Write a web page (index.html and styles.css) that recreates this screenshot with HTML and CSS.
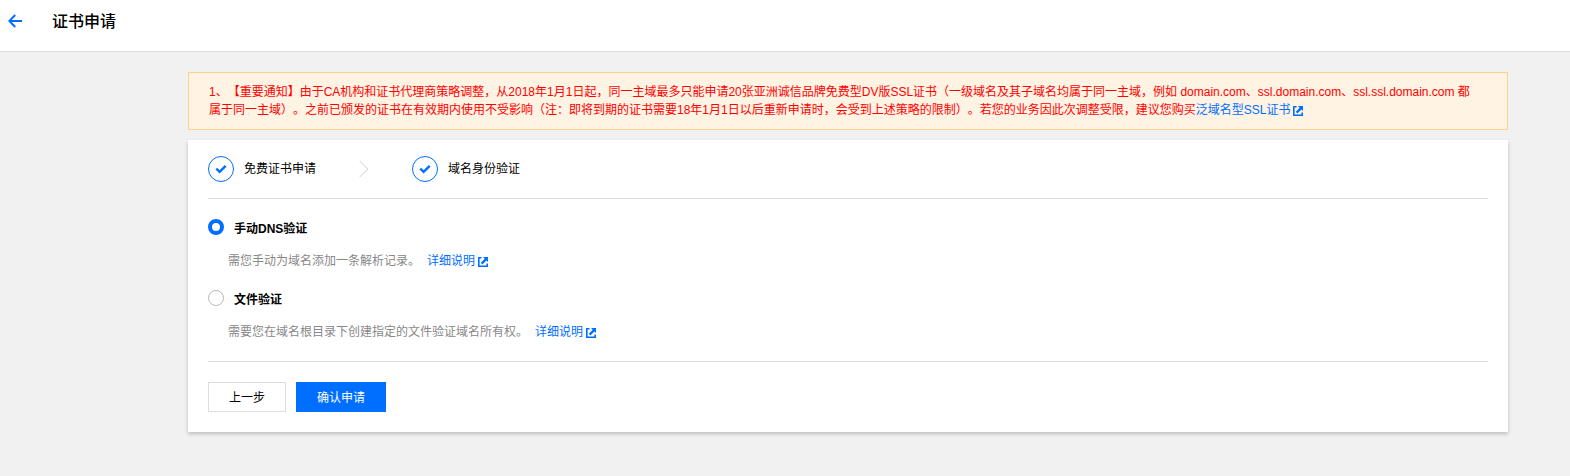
FILE: index.html
```html
<!DOCTYPE html>
<html lang="zh-CN">
<head>
<meta charset="utf-8">
<title>证书申请</title>
<link rel="stylesheet" href="styles.css">
</head>
<body>
<svg width="0" height="0" class="defs">
  <symbol id="external" viewBox="0 0 10 10">
    <path d="M3.5 0H0v10h10V6.5H8.4v1.9H1.6V1.6h1.9z"/>
    <path d="M5 0H10v5L8.4 3.4 4.4 7.4 2.8 5.8 6.7 1.8z"/>
  </symbol>
  <symbol id="check" viewBox="0 0 12 10">
    <path d="M1.3 4.7 4.6 7.9 10.7 1.9" fill="none" stroke="#006eff" stroke-width="2.4"/>
  </symbol>
</svg>
<header class="header">
  <a class="back"><svg width="14" height="14" viewBox="0 0 14 14"><path d="M14 7H1.5M7.2 1 1.3 7l5.9 6" fill="none" stroke="#006eff" stroke-width="2"/></svg></a>
  <h1 class="title">证书申请</h1>
</header>
<main class="content">
  <div class="notice">1、【重要通知】由于CA机构和证书代理商策略调整，从2018年1月1日起，同一主域最多只能申请20张亚洲诚信品牌免费型DV版SSL证书（一级域名及其子域名均属于同一主域，例如 domain.com、ssl.domain.com、ssl.ssl.domain.com 都<br>属于同一主域）。之前已颁发的证书在有效期内使用不受影响（注：即将到期的证书需要18年1月1日以后重新申请时，会受到上述策略的限制）。若您的业务因此次调整受限，建议您购买<a class="link">泛域名型SSL证书<svg class="ext"><use href="#external"/></svg></a></div>
  <section class="card">
    <div class="steps">
      <span class="circle"><svg width="12" height="10"><use href="#check"/></svg></span>
      <span class="step-name">免费证书申请</span>
      <svg class="chevron" width="10" height="18" viewBox="0 0 10 18"><path d="M.7 1 8.7 9l-8 8" fill="none" stroke="#ccc"/></svg>
      <span class="circle"><svg width="12" height="10"><use href="#check"/></svg></span>
      <span class="step-name">域名身份验证</span>
    </div>
    <div class="options">
      <div class="option">
        <label class="choice"><span class="radio checked"></span><span class="label">手动DNS验证</span></label>
        <p class="desc">需您手动为域名添加一条解析记录。<a class="link more">详细说明<svg class="ext"><use href="#external"/></svg></a></p>
      </div>
      <div class="option">
        <label class="choice"><span class="radio"></span><span class="label">文件验证</span></label>
        <p class="desc">需要您在域名根目录下创建指定的文件验证域名所有权。<a class="link more">详细说明<svg class="ext"><use href="#external"/></svg></a></p>
      </div>
    </div>
    <div class="actions">
      <button class="btn">上一步</button>
      <button class="btn primary">确认申请</button>
    </div>
  </section>
</main>
</body>
</html>
```
FILE: styles.css
```css
* { box-sizing: border-box; }
body {
  margin: 0;
  min-height: 476px;
  background: #f1f1f1;
  color: #000;
  font: 12px/18px "Liberation Sans", "Noto Sans CJK SC", sans-serif;
  text-spacing-trim: space-all;
}
.defs { position: absolute; }
.header {
  display: flex;
  height: 52px;
  padding: 0 8px;
  background: #fff;
  border-bottom: 1px solid #ddd;
}
.back { width: 44px; padding-top: 14px; }
.back svg { display: block; }
.title {
  margin: 0;
  padding-top: 12px;
  font-size: 16px;
  line-height: 20px;
  font-weight: 500;
}
.content { width: 1320px; margin: 20px 0 0 188px; }
.notice {
  height: 58px;
  padding: 10px 20px;
  border: 1px solid #ffd18b;
  background: #fff3e3;
  color: #f00;
  white-space: nowrap;
}
.link { color: #006eff; }
.ext {
  width: 10px;
  height: 10px;
  margin-left: 3px;
  vertical-align: -2px;
  fill: currentColor;
}
.card {
  height: 292px;
  margin-top: 10px;
  padding: 0 20px;
  background: #fff;
  box-shadow: 0 2px 4px rgba(0, 0, 0, .22);
}
.steps {
  display: flex;
  align-items: center;
  height: 59px;
  padding-bottom: 1px;
  border-bottom: 1px solid #ddd;
}
.circle {
  display: flex;
  align-items: center;
  justify-content: center;
  width: 26px;
  height: 26px;
  border: 1px solid #006eff;
  border-radius: 50%;
}
.step-name { margin-left: 10px; }
.chevron { margin: 0 43px; }
.options {
  height: 163px;
  padding-top: 20px;
  border-bottom: 1px solid #ddd;
}
.option { height: 71px; }
.choice { display: flex; height: 18px; }
.radio {
  width: 16px;
  height: 16px;
  margin-right: 10px;
  border: 1px solid #bbb;
  border-radius: 50%;
}
.checked { border: 4px solid #006eff; }
.label { padding-top: 1px; font-weight: 700; }
.desc { margin: 15px 0 0 20px; color: #888; }
.more { margin-left: 7px; }
.actions { display: flex; gap: 10px; padding-top: 20px; }
.btn {
  width: 78px;
  height: 30px;
  padding: 2px 0 0;
  border: 1px solid #ddd;
  background: #fff;
  color: #000;
  font: inherit;
}
.primary {
  width: 90px;
  border-color: #006eff;
  background: #006eff;
  color: #fff;
}
```
